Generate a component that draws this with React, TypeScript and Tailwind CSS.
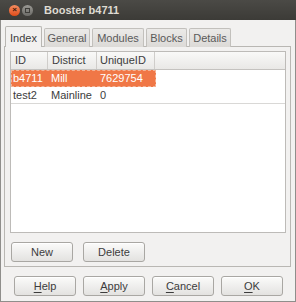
import React from "react";

const font = { fontFamily: '"Liberation Sans", Arial, sans-serif' };

function Btn({ label, u }: { label: string; u?: boolean }) {
  return (
    <button className="h-[20px] w-[62px] rounded-[3px] border border-[#a9a7a3] bg-gradient-to-b from-[#fbfbfa] to-[#e3e2e0] text-[11px] text-[#3c3c3c] shadow-[inset_0_1px_0_#ffffff]">
      {u ? (
        <>
          <span className="underline underline-offset-2">{label[0]}</span>
          {label.slice(1)}
        </>
      ) : (
        label
      )}
    </button>
  );
}

export default function App() {
  const tabs = [
    { name: "General", w: "w-[46px]" },
    { name: "Modules", w: "w-[52px]" },
    { name: "Blocks", w: "w-[41px]" },
    { name: "Details", w: "w-[42px]" },
  ];
  return (
    <div className="flex h-[302px] w-[296px] flex-col bg-[#f2f1f0] text-[11px] text-[#3c3c3c]" style={font}>
      {/* title bar */}
      <div className="flex h-[20px] items-center bg-gradient-to-b from-[#4b4a46] to-[#3c3b37] pl-[9px]">
        <div className="flex h-[11px] w-[11px] items-center justify-center rounded-full bg-gradient-to-b from-[#f58d5f] to-[#df4b16] text-[8px] font-bold leading-none text-[#3a1a0c]">
          ×
        </div>
        <div className="ml-[2px] flex h-[11px] w-[11px] items-center justify-center rounded-full bg-gradient-to-b from-[#9a9994] to-[#6c6b67]">
          <div className="h-[5px] w-[5px] border border-[#3f3e3a]" />
        </div>
        <div className="ml-[11px] text-[11px] font-bold text-[#dfdbd2]">Booster b4711</div>
      </div>

      {/* body */}
      <div className="flex flex-1 flex-col border-x border-b border-[#8f8e8b] px-[3px] pt-[6px]">
        {/* tabs */}
        <div className="relative z-10 flex h-[21px] items-end gap-[2px] pl-[1px]">
          <div className="flex h-[21px] w-[37px] items-center justify-center rounded-t-[2px] border border-b-0 border-[#b9b7b3] bg-[#f2f1f0] pt-[2px] text-[11px] text-[#3c3c3c]">
            Index
          </div>
          {tabs.map((t) => (
            <div
              key={t.name}
              className={`flex h-[19px] ${t.w} items-center justify-center rounded-t-[2px] border border-b-0 border-[#c2c0bc] bg-gradient-to-b from-[#ebeae8] to-[#dcdad7] text-[11px] text-[#5a5a5a]`}
            >
              {t.name}
            </div>
          ))}
        </div>

        {/* panel */}
        <div className="-mt-[1px] flex h-[221px] w-[287px] flex-col border border-[#b9b7b3] pb-[4px] pl-[5px] pr-[4px] pt-[4px]">
          <div className="flex h-[182px] flex-col border border-[#bdbbb8] bg-white">
            <div className="flex h-[18px] border-b border-[#c4c2bf] bg-gradient-to-b from-[#f9f9f8] to-[#e9e8e6] text-[#3c3c3c]">
              <div className="flex w-[37px] items-center border-r border-[#cfcdca] pl-[4px]">ID</div>
              <div className="flex w-[49px] items-center border-r border-[#cfcdca] pl-[4px]">District</div>
              <div className="flex w-[58px] items-center border-r border-[#cfcdca] pl-[3px]">UniqueID</div>
              <div className="flex-1" />
            </div>
            <div className="flex h-[17px]">
              <div className="flex w-[145px] items-center border border-dashed border-[#f6b394] bg-[#f07746] text-white">
                <div className="w-[37px] pl-[1px]">b4711</div>
                <div className="w-[49px] pl-[2px]">Mill</div>
                <div className="pl-[2px]">7629754</div>
              </div>
            </div>
            <div className="flex h-[17px] items-center border-b border-[#d9d8d6] text-[#3c3c3c]">
              <div className="w-[38px] pl-[2px]">test2</div>
              <div className="w-[49px] pl-[2px]">Mainline</div>
              <div className="pl-[2px]">0</div>
            </div>
          </div>
          <div className="mt-[9px] flex gap-[10px] pl-[1px]">
            <Btn label="New" />
            <Btn label="Delete" />
          </div>
        </div>

        {/* dialog buttons */}
        <div className="mt-[9px] flex gap-[7px] pl-[10px]">
          <Btn label="Help" u />
          <Btn label="Apply" u />
          <Btn label="Cancel" u />
          <Btn label="OK" u />
        </div>
      </div>
    </div>
  );
}
